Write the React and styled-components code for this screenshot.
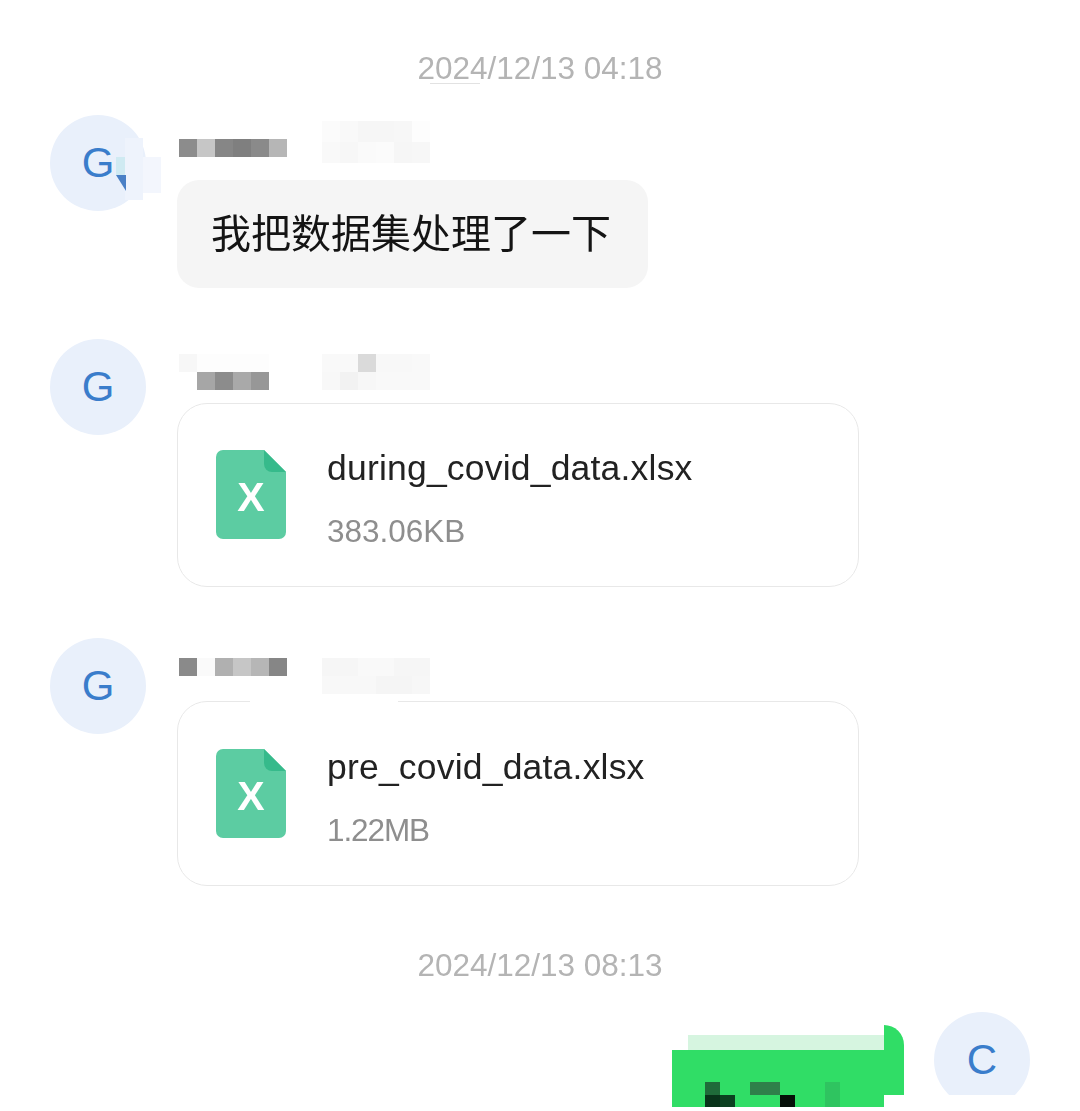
import styled, { createGlobalStyle } from "styled-components";

const p = "transparent";

const names = {
  first: {
    a: [["#8c8c8c", "#c6c6c6", "#868686", "#7f7f7f", "#8a8a8a", "#b6b6b6"]],
    b: [
      ["#fbfbfb", "#f9f9f9", "#f6f6f6", "#f6f6f6", "#f7f7f7", "#fdfdfd"],
      ["#f9f9f9", "#f7f7f7", "#fafafa", "#fbfbfb", "#f6f6f6", "#f7f7f7"],
    ],
  },
  second: {
    a: [
      ["#f7f7f7", "#fdfdfd", "#fdfdfd", "#fdfdfd", "#fdfdfd"],
      [p, "#a6a6a6", "#8c8c8c", "#a9a9a9", "#979797"],
    ],
    b: [
      ["#f9f9f9", "#f9f9f9", "#dadada", "#f8f8f8", "#f8f8f8", "#f9f9f9"],
      ["#f8f8f8", "#f2f2f2", "#f7f7f7", "#f9f9f9", "#f9f9f9", "#f9f9f9"],
    ],
  },
  third: {
    a: [["#8a8a8a", "#fafafa", "#b0b0b0", "#c6c6c6", "#b6b6b6", "#868686"]],
    b: [
      ["#f6f6f6", "#f6f6f6", "#f9f9f9", "#f9f9f9", "#f6f6f6", "#f6f6f6"],
      ["#f8f8f8", "#f8f8f8", "#f8f8f8", "#f5f5f5", "#f5f5f5", "#f7f7f7"],
    ],
  },
};

const sentCells = [
  ["#1f6b3a", p, p, "#2f7f4a", "#2f7f4a", p, p, p, "#2fc460"],
  ["#08331a", "#0b4020", p, p, p, "#050f08", p, p, "#2fc460"],
];

function Mosaic({ rows, w = 18, h = 18 }) {
  return (
    <Grid $cols={rows[0].length} $w={w} $h={h}>
      {rows.flat().map((c, i) => (
        <Cell key={i} $c={c} />
      ))}
    </Grid>
  );
}

function XlsxIcon() {
  return (
    <svg width="70" height="89" viewBox="0 0 70 89">
      <path
        d="M7 0H48L70 22V82a7 7 0 0 1-7 7H7a7 7 0 0 1-7-7V7a7 7 0 0 1 7-7Z"
        fill="#5ccca2"
      />
      <path d="M48 0L70 22H56a8 8 0 0 1-8-8Z" fill="#36ba8b" />
      <text
        x="35"
        y="61"
        textAnchor="middle"
        fontFamily="Liberation Sans"
        fontWeight="700"
        fontSize="41"
        fill="#ffffff"
      >
        X
      </text>
    </svg>
  );
}

function FileCard({ name, size, last }) {
  return (
    <Card $last={last}>
      {last && <BorderGap />}
      <XlsxIcon />
      <FileInfo>
        <FileName>{name}</FileName>
        <FileSize $tight={last}>{size}</FileSize>
      </FileInfo>
    </Card>
  );
}

function App() {
  return (
    <Page>
      <GlobalStyle />
      <Time>
        <Mark>2024/12/13 04:18</Mark>
      </Time>

      <Row>
        <Avatar>
          G
          <Smear1 />
          <Smear2 />
          <Smear3 />
          <Tip viewBox="0 0 10 16">
            <path d="M0 0H10V16Z" fill="#4a80c6" />
          </Tip>
        </Avatar>
        <Content>
          <NameBar $h={65}>
            <NamePart $top={24}>
              <Mosaic rows={names.first.a} />
            </NamePart>
            <NickPart $top={6}>
              <Mosaic rows={names.first.b} h={21} />
            </NickPart>
          </NameBar>
          <Bubble>我把数据集处理了一下</Bubble>
        </Content>
      </Row>

      <Row>
        <Avatar>G</Avatar>
        <Content>
          <NameBar $h={64}>
            <NamePart $top={15}>
              <Mosaic rows={names.second.a} />
            </NamePart>
            <NickPart $top={15}>
              <Mosaic rows={names.second.b} />
            </NickPart>
          </NameBar>
          <FileCard name="during_covid_data.xlsx" size="383.06KB" />
        </Content>
      </Row>

      <Row>
        <Avatar>G</Avatar>
        <Content>
          <NameBar $h={63}>
            <NamePart $top={20}>
              <Mosaic rows={names.third.a} />
            </NamePart>
            <NickPart $top={20}>
              <Mosaic rows={names.third.b} />
            </NickPart>
          </NameBar>
          <FileCard name="pre_covid_data.xlsx" size="1.22MB" last />
        </Content>
      </Row>

      <Time $top={59}>2024/12/13 08:13</Time>

      <SentRow>
        <Sent>
          <SentMain>
            <SentStrip />
            <SentBody>
              <Mosaic rows={sentCells} w={15} h={12.5} />
            </SentBody>
          </SentMain>
          <SentTail />
        </Sent>
        <AvatarClip>
          <Avatar>C</Avatar>
        </AvatarClip>
      </SentRow>
    </Page>
  );
}

export default App;

const GlobalStyle = createGlobalStyle`
  body {
    margin: 0;
    background: #ffffff;
  }
`;

const Page = styled.div`
  width: 1080px;
  height: 1111px;
  overflow: hidden;
  padding-top: 48px;
  box-sizing: border-box;
  font-family: "Liberation Sans", "Noto Sans CJK SC", sans-serif;
  filter: blur(0.5px);
`;

const Time = styled.div`
  height: 40px;
  line-height: 40px;
  margin-top: ${(props) => props.$top || 0}px;
  text-align: center;
  font-size: 31.5px;
  color: #b4b4b4;
`;

const Mark = styled.span`
  position: relative;

  &::after {
    content: "";
    position: absolute;
    left: 13px;
    bottom: 2px;
    width: 50px;
    height: 1px;
    background: #e2e2e2;
  }
`;

const Row = styled.div`
  display: flex;
  gap: 31px;
  padding-left: 50px;
  margin-top: 27px;

  & + & {
    margin-top: 51px;
  }
`;

const Avatar = styled.div`
  position: relative;
  flex: none;
  width: 96px;
  height: 96px;
  border-radius: 50%;
  background: #e9f0fb;
  color: #3a7dcb;
  font-size: 42px;
  line-height: 96px;
  text-align: center;
`;

const Smear1 = styled.div`
  position: absolute;
  left: 75px;
  top: 23px;
  width: 18px;
  height: 62px;
  background: #eef3fc;
`;

const Smear2 = styled.div`
  position: absolute;
  left: 93px;
  top: 42px;
  width: 18px;
  height: 36px;
  background: #f3f6fd;
`;

const Smear3 = styled.div`
  position: absolute;
  left: 66px;
  top: 42px;
  width: 9px;
  height: 18px;
  background: #cfeaf2;
`;

const Tip = styled.svg`
  position: absolute;
  left: 66px;
  top: 60px;
  width: 10px;
  height: 16px;
`;

const Content = styled.div`
  display: flex;
  flex-direction: column;
  align-items: flex-start;
`;

const NameBar = styled.div`
  display: flex;
  height: ${(props) => props.$h}px;
  padding-left: 2px;
`;

const NamePart = styled.div`
  width: 143px;
  margin-top: ${(props) => props.$top}px;
`;

const NickPart = styled.div`
  margin-top: ${(props) => props.$top}px;
`;

const Grid = styled.div`
  display: grid;
  grid-template-columns: repeat(${(props) => props.$cols}, ${(props) => props.$w}px);
  grid-auto-rows: ${(props) => props.$h}px;
`;

const Cell = styled.div`
  background: ${(props) => props.$c};
`;

const Bubble = styled.div`
  width: 471px;
  height: 108px;
  box-sizing: border-box;
  padding-left: 34px;
  line-height: 108px;
  font-size: 40px;
  color: #141414;
  background: #f5f5f5;
  border-radius: 22px;
`;

const Card = styled.div`
  position: relative;
  display: flex;
  align-items: center;
  gap: 41px;
  width: 682px;
  height: ${(props) => (props.$last ? 185 : 184)}px;
  box-sizing: border-box;
  padding: 0 0 ${(props) => (props.$last ? 0 : 1)}px 38px;
  border: 1px solid #e8e8e8;
  border-radius: 30px;
`;

const BorderGap = styled.div`
  position: absolute;
  left: 72px;
  top: -1px;
  width: 148px;
  height: 1px;
  background: #ffffff;
`;

const FileInfo = styled.div`
  display: flex;
  flex-direction: column;
  gap: 24px;
  padding-top: 6px;
`;

const FileName = styled.div`
  font-size: 35.5px;
  letter-spacing: 0.2px;
  line-height: 42px;
  color: #222222;
`;

const FileSize = styled.div`
  font-size: 31.5px;
  line-height: 36px;
  letter-spacing: ${(props) => (props.$tight ? "-1.1px" : "0")};
  color: #8e8e8e;
`;

const SentRow = styled.div`
  display: flex;
  justify-content: flex-end;
  gap: 30px;
  padding-right: 50px;
  margin-top: 27px;
`;

const Sent = styled.div`
  display: flex;
  align-items: flex-start;
  margin-top: 13px;
`;

const SentMain = styled.div`
  width: 212px;
  padding-top: 10px;
`;

const SentStrip = styled.div`
  height: 15px;
  margin-left: 16px;
  background: #d6f5e0;
`;

const SentBody = styled.div`
  height: 57px;
  box-sizing: border-box;
  padding: 32px 0 0 33px;
  background: #30dd66;
`;

const SentTail = styled.div`
  width: 20px;
  height: 70px;
  background: #30dd66;
  border-radius: 0 20px 0 0;
`;

const AvatarClip = styled.div`
  height: 83px;
  overflow: hidden;
`;
